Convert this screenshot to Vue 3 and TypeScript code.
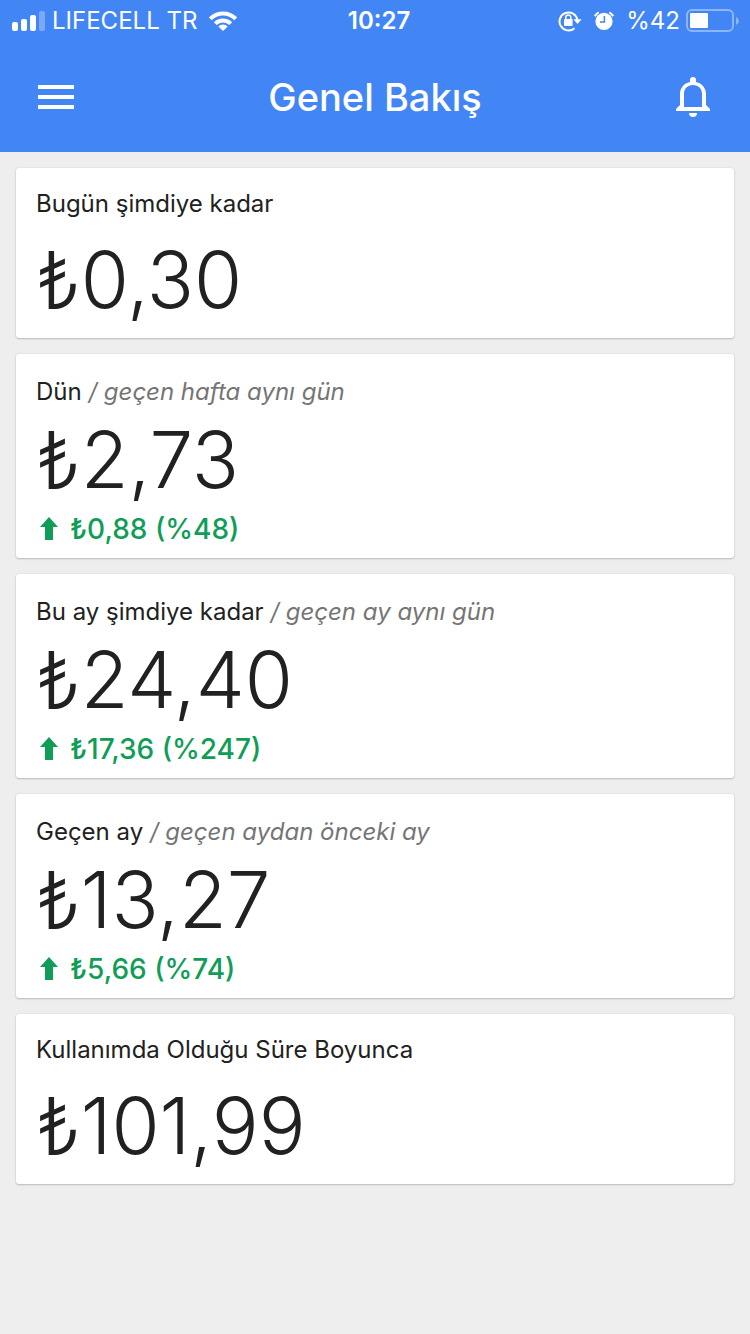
<script setup lang="ts">
interface Summary {
  label: string
  compare?: string
  amount: string
  change?: string
}

const cards: Summary[] = [
  { label: 'Bugün şimdiye kadar', amount: '₺0,30' },
  { label: 'Dün', compare: '/ geçen hafta aynı gün', amount: '₺2,73', change: '₺0,88 (%48)' },
  { label: 'Bu ay şimdiye kadar', compare: '/ geçen ay aynı gün', amount: '₺24,40', change: '₺17,36 (%247)' },
  { label: 'Geçen ay', compare: '/ geçen aydan önceki ay', amount: '₺13,27', change: '₺5,66 (%74)' },
  { label: 'Kullanımda Olduğu Süre Boyunca', amount: '₺101,99' },
]
</script>

<template>
  <div class="screen">
    <header class="header">
      <div class="status">
        <div class="side">
          <svg class="signal" width="33" height="20" viewBox="0 0 33 20" fill="#fff" aria-hidden="true">
            <rect x="0" y="11" width="6" height="9" rx="2" />
            <rect x="9" y="8" width="6" height="12" rx="2" />
            <rect x="18" y="4" width="6" height="16" rx="2" />
            <rect x="27" y="0" width="6" height="20" rx="2" opacity="0.3" />
          </svg>
          <span class="carrier">LIFECELL TR</span>
          <svg class="wifi" width="28" height="20" viewBox="0 0 28 20" aria-hidden="true">
            <g fill="none" stroke="#fff" stroke-width="4">
              <path d="M1.2 7.8 A18.2 18.2 0 0 1 26.8 7.8" />
              <path d="M6.2 12.6 A11.2 11.2 0 0 1 21.8 12.6" />
            </g>
            <path d="M9.3 15.5 A6.8 6.8 0 0 1 18.7 15.5 L14 20 Z" fill="#fff" />
          </svg>
        </div>
        <span class="clock">10:27</span>
        <div class="side end">
          <svg class="lock" width="24" height="22" viewBox="0 0 24 22" aria-hidden="true">
            <path d="M16.5 18.2 A9 9 0 1 1 19.4 10" fill="none" stroke="#fff" stroke-width="2" />
            <path d="M15.4 9.3 H23.6 L19.5 14 Z" fill="#fff" />
            <rect x="6" y="9" width="8.6" height="7" rx="1" fill="#fff" />
            <path d="M7.8 9.5 V7.4 A2.5 2.5 0 0 1 12.8 7.4 V9.5" fill="none" stroke="#fff" stroke-width="1.5" />
          </svg>
          <svg class="alarm" width="20" height="20" viewBox="0 0 20 20" aria-hidden="true">
            <circle cx="10" cy="10.4" r="8.6" fill="#fff" />
            <path d="M10.4 5 V11 H6" fill="none" stroke="#4285f4" stroke-width="1.5" />
            <path d="M0.7 5.2 A11 11 0 0 1 4.7 1.3 M15.3 1.3 A11 11 0 0 1 19.3 5.2" fill="none" stroke="#fff" stroke-width="2" />
          </svg>
          <span class="percent">%42</span>
          <svg class="battery" width="54" height="23" viewBox="0 0 54 23" aria-hidden="true">
            <rect x="1" y="1" width="46" height="21" rx="5" fill="none" stroke="#fff" stroke-opacity="0.4" stroke-width="2" />
            <rect x="4" y="4" width="18" height="15" rx="1" fill="#fff" />
            <path d="M50 8 Q53 9.5 53 12 Q53 14.5 50 16 Z" fill="#fff" fill-opacity="0.4" />
          </svg>
        </div>
      </div>
      <div class="bar">
        <button class="icon" type="button" aria-label="Menü">
          <svg width="36" height="24" viewBox="0 0 36 24" fill="#fff">
            <path d="M0 0H36V4H0Z M0 10H36V14H0Z M0 20H36V24H0Z" />
          </svg>
        </button>
        <h1 class="title">Genel Bakış</h1>
        <button class="icon" type="button" aria-label="Bildirimler">
          <svg width="34" height="40" viewBox="0 0 34 40">
            <path fill="#fff" d="M13 36 H21 A4 4 0 0 1 13 36 Z" />
            <path fill="#fff" fill-rule="evenodd" d="M14 5 V3 A3 3 0 0 1 20 3 V5 C26 6.3 30 11 30 17 V28 L34 32 V34 H0 V32 L4 28 V17 C4 11 8 6.3 14 5 Z M8 30 H26 V17 C26 11.5 22.5 8 17 8 C11.5 8 8 11.5 8 17 Z" />
          </svg>
        </button>
      </div>
    </header>
    <main class="cards">
      <section v-for="card in cards" :key="card.label" class="card" :class="{ detailed: card.change }">
        <h2 class="label">{{ card.label }} <em v-if="card.compare">{{ card.compare }}</em></h2>
        <p class="amount">{{ card.amount }}</p>
        <p v-if="card.change" class="change">
          <svg width="18" height="24" viewBox="0 0 18 24" fill="#0f9d58" aria-hidden="true">
            <path d="M9 0 L18 10 H13 V23 H5 V10 H0 Z" />
          </svg>
          <span>{{ card.change }}</span>
        </p>
      </section>
    </main>
  </div>
</template>

<style>
body {
  background: #eee;
}
</style>

<style scoped>
.screen {
  min-height: 100vh;
  background: #eee;
  color: #212121;
  font-family: Inter, Roboto, "Liberation Sans", sans-serif;
}
.header {
  background: #4285f4;
  color: #fff;
}
.status {
  display: flex;
  align-items: center;
  height: 41px;
  padding: 0 12px;
  font-size: 24px;
  line-height: 42px;
}
.side {
  display: flex;
  flex: 1;
  align-items: center;
}
.end {
  justify-content: flex-end;
}
.carrier {
  margin: 0 12px 0 7px;
}
.clock {
  padding-left: 8px;
  font-weight: 600;
}
.alarm {
  margin: 0 12px;
}
.percent {
  margin-right: 6px;
}
.battery {
  margin-right: -2px;
}
.bar {
  display: flex;
  align-items: center;
  justify-content: space-between;
  height: 111px;
  padding: 0 40px 0 38px;
}
.icon {
  display: flex;
  padding: 0;
  border: 0;
  background: none;
  cursor: pointer;
}
.title {
  margin: 0;
  font-size: 38px;
  font-weight: 500;
  line-height: 48px;
}
.cards {
  display: flex;
  flex-direction: column;
  gap: 16px;
  padding: 16px;
}
.card {
  padding: 22px 20px 18px;
  border-radius: 3px;
  background: #fff;
  box-shadow: 0 1px 2px rgba(0, 0, 0, 0.2), 0 0 2px rgba(0, 0, 0, 0.1);
}
.label {
  margin: 0 0 22px;
  font-size: 24px;
  font-weight: 400;
  line-height: 28px;
}
.label em {
  color: #757575;
}
.amount {
  margin: 0;
  font-size: 78px;
  font-weight: 300;
  line-height: 80px;
}
.detailed {
  padding: 24px 20px 13px;
}
.detailed .label {
  margin-bottom: 14px;
}
.change {
  display: flex;
  align-items: center;
  gap: 12px;
  margin: 13px 0 0;
  padding-left: 4px;
  color: #0f9d58;
  font-size: 28px;
  font-weight: 500;
  line-height: 32px;
}
</style>
